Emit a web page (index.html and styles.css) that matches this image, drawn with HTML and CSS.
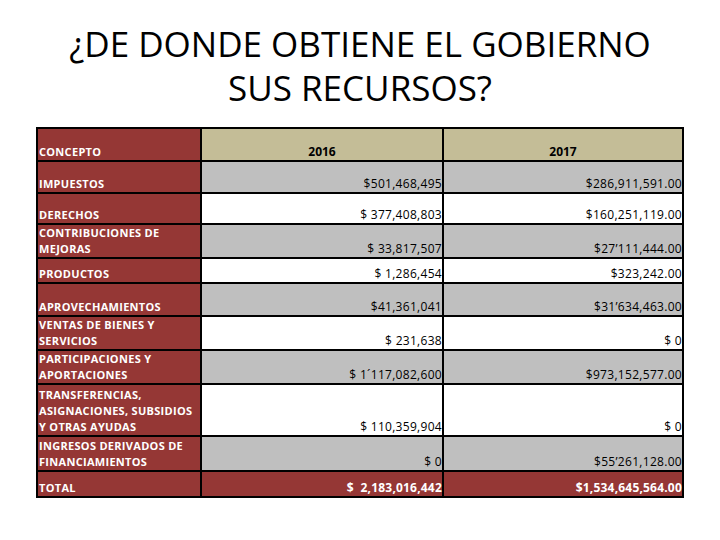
FILE: index.html
```html
<!DOCTYPE html>
<html lang="es">
<head>
<meta charset="utf-8">
<title>¿De donde obtiene el gobierno sus recursos?</title>
<link rel="stylesheet" href="styles.css">
</head>
<body>
<div class="slide">
  <h1 class="title">¿DE DONDE OBTIENE EL GOBIERNO<br>SUS RECURSOS?</h1>
  <div class="grid">
    <div class="c lab">CONCEPTO</div>
    <div class="c head">2016</div>
    <div class="c head">2017</div>

    <div class="c lab">IMPUESTOS</div>
    <div class="c val grey">$501,468,495</div>
    <div class="c val grey">$286,911,591.00</div>

    <div class="c lab">DERECHOS</div>
    <div class="c val">$ 377,408,803</div>
    <div class="c val">$160,251,119.00</div>

    <div class="c lab">CONTRIBUCIONES DE<br>MEJORAS</div>
    <div class="c val grey">$ 33,817,507</div>
    <div class="c val grey">$27’111,444.00</div>

    <div class="c lab">PRODUCTOS</div>
    <div class="c val">$ 1,286,454</div>
    <div class="c val">$323,242.00</div>

    <div class="c lab">APROVECHAMIENTOS</div>
    <div class="c val grey">$41,361,041</div>
    <div class="c val grey">$31’634,463.00</div>

    <div class="c lab">VENTAS DE BIENES Y<br>SERVICIOS</div>
    <div class="c val">$ 231,638</div>
    <div class="c val">$ 0</div>

    <div class="c lab">PARTICIPACIONES Y<br>APORTACIONES</div>
    <div class="c val grey">$ 1´117,082,600</div>
    <div class="c val grey">$973,152,577.00</div>

    <div class="c lab">TRANSFERENCIAS,<br>ASIGNACIONES, SUBSIDIOS<br>Y OTRAS AYUDAS</div>
    <div class="c val">$ 110,359,904</div>
    <div class="c val">$ 0</div>

    <div class="c lab">INGRESOS DERIVADOS DE<br>FINANCIAMIENTOS</div>
    <div class="c val grey">$ 0</div>
    <div class="c val grey">$55’261,128.00</div>

    <div class="c lab">TOTAL</div>
    <div class="c val total">$&nbsp;&nbsp;2,183,016,442</div>
    <div class="c val total">$1,534,645,564.00</div>
  </div>
</div>
</body>
</html>
```
FILE: styles.css
```css
html, body {
  margin: 0;
  padding: 0;
  background: #ffffff;
}

.slide {
  width: 720px;
  height: 540px;
  display: flex;
  flex-direction: column;
  align-items: flex-start;
}

.title {
  align-self: stretch;
  margin: 22px 0 0 0;
  height: 105px;
  font-family: "Open Sans", sans-serif;
  font-weight: 400;
  font-size: 35px;
  line-height: 44px;
  text-align: center;
  color: #000;
}

.grid {
  margin-left: 36px;
  display: grid;
  grid-template-columns: 162px 240px 238px;
  grid-template-rows: 31px 30px 29px 32px 23px 31px 32px 32px 50px 33px 24px;
  gap: 2px;
  padding: 2px;
  background: #000;
  font-family: "Open Sans", sans-serif;
  font-size: 11px;
  line-height: 16px;
}

.c {
  display: flex;
  flex-direction: column;
  justify-content: flex-end;
  padding: 0;
  white-space: nowrap;
}

.lab {
  background: #953735;
  color: #ffffff;
  font-weight: 700;
  padding-left: 1px;
  letter-spacing: 0.3px;
}

.head {
  background: #c4bd97;
  color: #000;
  font-weight: 700;
  font-size: 12px;
  text-align: center;
}

.val {
  background: #ffffff;
  color: #000;
  text-align: right;
  font-size: 12px;
  letter-spacing: 0.3px;
}

.grey {
  background: #bfbfbf;
}

.total {
  background: #953735;
  color: #ffffff;
  font-weight: 700;
  letter-spacing: 0.2px;
}
```
